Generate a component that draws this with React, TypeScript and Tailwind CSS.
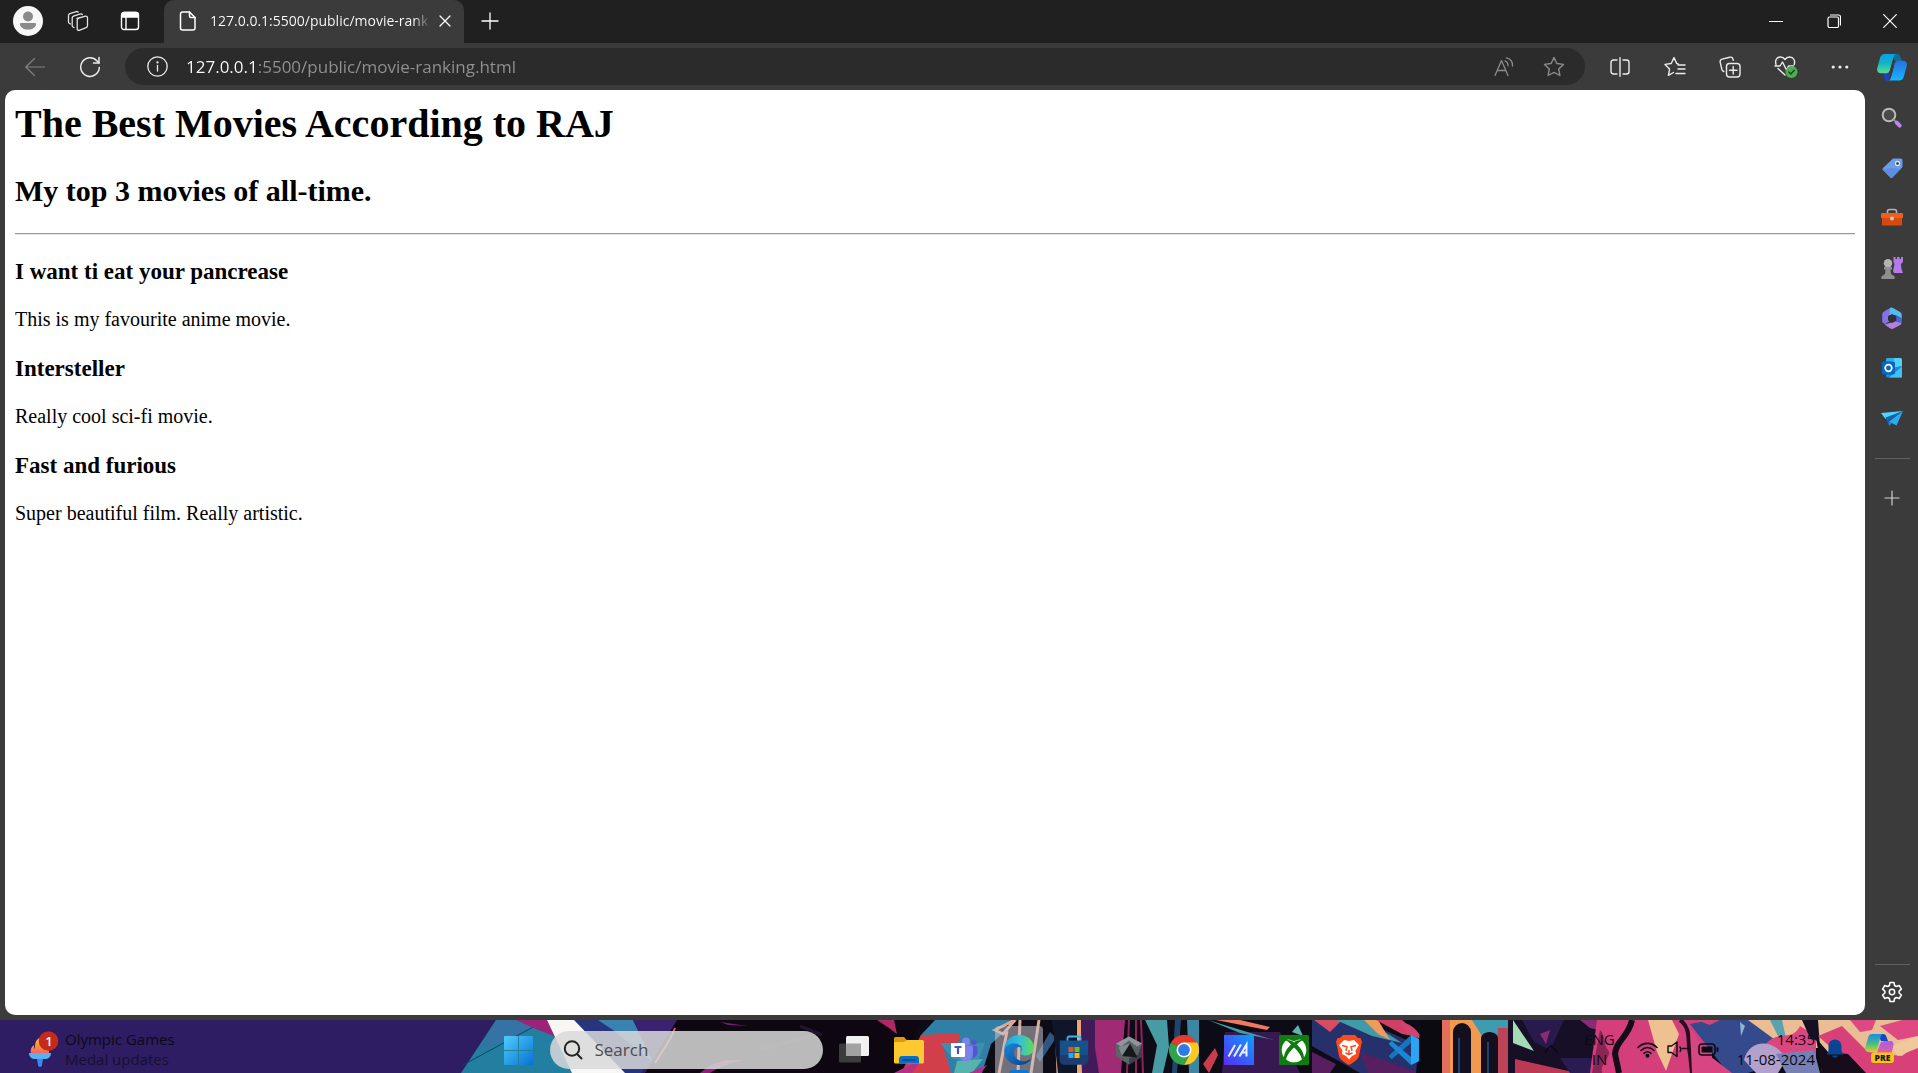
import React from "react";

type IconProps = { children: React.ReactNode; size?: number; box?: string; className?: string; stroke?: number };

function Line({ children, size = 20, box = "0 0 20 20", className = "", stroke = 1.2 }: IconProps) {
  return (
    <svg
      width={size}
      height={size}
      viewBox={box}
      fill="none"
      stroke="currentColor"
      strokeWidth={stroke}
      strokeLinecap="round"
      strokeLinejoin="round"
      className={`shrink-0 ${className}`}
      aria-hidden="true"
    >
      {children}
    </svg>
  );
}

function Art({ children, size = 30, box = "0 0 30 30" }: IconProps) {
  return (
    <svg width={size} height={size} viewBox={box} className="shrink-0" aria-hidden="true">
      {children}
    </svg>
  );
}

function IconButton({ label, className = "", children }: { label: string; className?: string; children: React.ReactNode }) {
  return (
    <button type="button" aria-label={label} className={`flex shrink-0 items-center justify-center ${className}`}>
      {children}
    </button>
  );
}

function TitleBar() {
  return (
    <header className="flex h-[43px] shrink-0 bg-[#202020] text-white">
      <div className="flex w-[164px] shrink-0 items-center pb-[1px] pl-[3px]">
        <IconButton label="Profile" className="h-full w-[50px]">
          <Art>
            <circle cx="15" cy="15" r="15" fill="#f7f7f7" />
            <circle cx="15" cy="10.5" r="5" fill="#8a8a8a" />
            <path d="M8 17h14a1 1 0 0 1 1 1c0 3.500-3.500 5.500-8 5.500s-8-2-8-5.500a1 1 0 0 1 1-1z" fill="#8a8a8a" />
          </Art>
        </IconButton>
        <IconButton label="Workspaces" className="h-full w-[49px] text-[#e4e4e4]">
          <Line size={22} box="0 0 22 22" stroke={1.3}>
            <path d="M10 8.500l8.500-2.300a1.600 1.600 0 0 1 2 1.600v8a2 2 0 0 1-1.300 1.800l-7 2.700a1.500 1.500 0 0 1-2-1.400v-8.600a2 2 0 0 1 1.300-1.900z" />
            <path d="M7 17.500l-1-.5a1.500 1.500 0 0 1-.8-1.300V8a2 2 0 0 1 1.300-1.900l7-2.200a1.500 1.500 0 0 1 1.800.7" />
            <path d="M3.500 14l-1.300-.8a1.500 1.500 0 0 1-.7-1.300V5.500a2 2 0 0 1 1.300-1.900l6.500-2a1.500 1.500 0 0 1 1.800.6" />
          </Line>
        </IconButton>
        <IconButton label="Tab actions menu" className="h-full w-[55px]">
          <Line size={20} stroke={1.4}>
            <rect x="1.500" y="1.500" width="17" height="17" rx="2.500" />
            <path d="M2 3.500a2 2 0 0 1 2-2h12a2 2 0 0 1 2 2V6H2z" fill="currentColor" />
            <path d="M6 6v12" />
          </Line>
        </IconButton>
      </div>
      <div className="flex w-[300px] min-w-0 items-center rounded-t-[10px] bg-[#3b3b3b] pb-[1px] pl-[14px] pr-1">
        <Line size={20} box="0 0 20 20" stroke={1.5}>
          <path d="M4 1h7.500L17 6.500V17a2 2 0 0 1-2 2H4.500a2 2 0 0 1-2-2V3A2 2 0 0 1 4 1z" />
          <path d="M11.500 1v4a1.500 1.500 0 0 0 1.500 1.500h4" />
        </Line>
        <span className="ml-3 w-[219px] shrink-0 overflow-hidden whitespace-nowrap bg-[linear-gradient(90deg,#fff_93%,#4b4b4b)] bg-clip-text text-[14px] leading-5 text-transparent">
          127.0.0.1:5500/public/movie-ranking.html
        </span>
        <IconButton label="Close tab" className="h-8 w-8">
          <Line size={12} box="0 0 12 12" stroke={1.3}>
            <path d="M1 1l10 10M11 1L1 11" />
          </Line>
        </IconButton>
      </div>
      <IconButton label="New tab" className="ml-[10px] h-[42px] w-8">
        <Line size={18} box="0 0 18 18" stroke={1.3}>
          <path d="M9 1v16M1 9h16" />
        </Line>
      </IconButton>
      <div className="ml-auto flex pb-[1px]">
        <IconButton label="Minimize" className="h-full w-[58px]">
          <Line size={14} box="0 0 14 14" stroke={1.2}>
            <path d="M0.500 7.500h13" />
          </Line>
        </IconButton>
        <IconButton label="Restore" className="h-full w-[57px]">
          <Line size={14} box="0 0 14 14" stroke={1.2}>
            <rect x="1" y="3" width="10.500" height="10.500" rx="1.500" />
            <path d="M3.500 1h8A2 2 0 0 1 13.500 3v8" />
          </Line>
        </IconButton>
        <IconButton label="Close" className="h-full w-[56px]">
          <Line size={14} box="0 0 14 14" stroke={1.2}>
            <path d="M.7.700l12.600 12.600M13.300.700L.7 13.300" />
          </Line>
        </IconButton>
      </div>
    </header>
  );
}

function Copilot() {
  return (
    <Art size={30}>
      <defs>
        <linearGradient id="cpA" x1="0" y1="0" x2="0" y2="1">
          <stop offset="0" stopColor="#0a9fe8" />
          <stop offset=".45" stopColor="#0cb4c8" />
          <stop offset="1" stopColor="#5fdc8c" />
        </linearGradient>
        <linearGradient id="cpB" x1="0" y1="0" x2="0" y2="1">
          <stop offset="0" stopColor="#2a6fe0" />
          <stop offset="1" stopColor="#14b8ff" />
        </linearGradient>
      </defs>
      <path d="M15 2h5c2 0 3 1 3.500 3l1.500 4h-7z" fill="#0d6f98" />
      <path d="M6 20h8l-3 9c-2 0-3-1-3.500-3z" fill="#1c3fd0" />
      <path d="M8 2h12c-2 0-3 1-3.500 3L13 18c-.6 2-1.800 3.300-4 3.300H4c-3 0-4.500-2.300-3.700-5.300L3 6c.8-2.600 2.500-4 5-4z" fill="url(#cpA)" />
      <path d="M22 28.500H10.500c2 0 3-1 3.500-3L17.500 12c.6-2 1.800-3.200 4-3.200H26c3 0 4.500 2.200 3.700 5.200L27 24c-.8 3-2.500 4.500-5 4.500z" fill="url(#cpB)" />
      <path d="M14.500 12.500h2.700L15.500 20l-1 3H11.300l2-5z" fill="#3b3b3b" />
    </Art>
  );
}

function Toolbar() {
  return (
    <div className="flex h-[47px] shrink-0 items-center bg-[#3b3b3b] text-[#ececec]">
      <div className="flex w-[125px] shrink-0 items-center pl-[7px]">
        <IconButton label="Back" className="h-9 w-[55px] text-[#818181]">
          <Line>
            <path d="M19.500 10H.8M9.500 1.500L.8 10l8.700 8.500" />
          </Line>
        </IconButton>
        <IconButton label="Refresh" className="h-9 w-[55px]">
          <Line size={22} box="0 0 22 22" stroke={1.5}>
            <path d="M20.300 11.500A9.300 9.300 0 1 1 17.800 4.700L20 7" />
            <path d="M20 1.500V7h-5.500" />
          </Line>
        </IconButton>
      </div>
      <div className="flex h-[37px] min-w-0 flex-1 items-center rounded-full bg-[#2b2b2b] pl-[22px] pr-[6px]">
        <button type="button" aria-label="View site information">
          <Line size={21} box="0 0 21 21" stroke={1.3}>
            <circle cx="10.500" cy="10.500" r="9.700" />
            <path d="M10.500 9.500v5.500" />
            <circle cx="10.500" cy="6.400" r=".5" fill="currentColor" />
          </Line>
        </button>
        <input
          aria-label="Address and search bar"
          readOnly
          value="127.0.0.1:5500/public/movie-ranking.html"
          className="ml-[18px] h-8 min-w-0 flex-1 bg-[linear-gradient(90deg,#fff_71px,#929292_71px)] bg-clip-text text-[17px] text-transparent outline-none"
        />
        <IconButton label="Read aloud" className="h-8 w-[50px] text-[#8b8b8b]">
          <Line stroke={1.3}>
            <path d="M1 18.500L7.500 3.500l6.500 15M3.200 13.500h8.600" />
            <path d="M11 3.800a5 5 0 0 1 3 5M12.300.800c3.800.500 6.700 4 6.200 8.200" />
          </Line>
        </IconButton>
        <IconButton label="Add to favorites" className="h-8 w-[50px] text-[#8b8b8b]">
          <Line size={22} box="0 0 22 22" stroke={1.4}>
            <path d="M11 1.500l2.900 6 6.600.9-4.800 4.600 1.200 6.500L11 16.400l-5.900 3.100 1.200-6.500L1.500 8.400l6.600-.9z" />
          </Line>
        </IconButton>
      </div>
      <div className="flex shrink-0 pl-[7px]">
        <IconButton label="Split screen" className="h-9 w-[55px]">
          <Line stroke={1.4}>
            <path d="M7 3H3.500A2.500 2.500 0 0 0 1 5.500v9A2.500 2.500 0 0 0 3.500 17H7M13 3h3.500A2.500 2.500 0 0 1 19 5.500v9a2.500 2.500 0 0 1-2.500 2.500H13M10 .700v18.600" />
          </Line>
        </IconButton>
        <IconButton label="Favorites" className="h-9 w-[55px]">
          <Line size={22} box="0 0 22 22" stroke={1.4}>
            <path d="M14 7.700l-1.300-.2L10 1.600 7.200 7.500l-6.200.9 4.600 4.500-1.200 6.500L9.500 16.500M14 9h7M14 13h7M12 17.500h9" />
          </Line>
        </IconButton>
        <IconButton label="Collections" className="h-9 w-[55px]">
          <Line size={22} box="0 0 22 22" stroke={1.4}>
            <rect x="7.500" y="7.500" width="13.500" height="13.500" rx="3" />
            <path d="M14.200 10.500v7.500M10.500 14.200H18M4.800 15.500c-1-.3-1.600-.9-1.900-2L1.200 6.400c-.4-1.600.3-2.900 2-3.300l7.500-1.900c1.600-.4 2.900.3 3.300 2l.3 1.200" />
          </Line>
        </IconButton>
        <IconButton label="Browser essentials" className="h-9 w-[57px]">
          <Line size={24} box="0 0 24 24" stroke={1.4}>
            <path d="M2 9.500C.5 4.500 3.500 2 6.500 2c2 0 3.500 1 4.500 2.500C12 3 13.500 2 15.500 2c4 0 6 3.500 4.700 7.500M1 11h5l2.500-4 4 8 2-4h5M4 13.500l7 6.500" />
            <circle cx="17.500" cy="17" r="6" fill="#4caf50" stroke="none" />
            <path d="M14.800 17l2 2 3.500-3.700" stroke="#20401f" strokeWidth="1.500" />
          </Line>
        </IconButton>
        <IconButton label="Settings and more" className="h-9 w-[51px]">
          <Line size={18} box="0 0 18 18" stroke={0}>
            <g fill="currentColor">
              <circle cx="2.200" cy="9" r="1.600" />
              <circle cx="9" cy="9" r="1.600" />
              <circle cx="15.800" cy="9" r="1.600" />
            </g>
          </Line>
        </IconButton>
        <IconButton label="Copilot" className="h-9 w-[53px]">
          <Copilot />
        </IconButton>
      </div>
    </div>
  );
}

const movies = [
  { title: "I want ti eat your pancrease", text: "This is my favourite anime movie." },
  { title: "Intersteller", text: "Really cool sci-fi movie." },
  { title: "Fast and furious", text: "Super beautiful film. Really artistic." },
];

function Page() {
  return (
    <main className="min-w-0 flex-1 overflow-auto rounded-[10px] bg-white p-[10px] pt-[11px] font-['Liberation_Serif',serif] text-black">
      <h1 className="text-[40px] font-bold leading-[46px]">The Best Movies According to RAJ</h1>
      <h2 className="mt-[27px] text-[30px] font-bold leading-[34px]">My top 3 movies of all-time.</h2>
      <hr className="mt-[25px] border-t border-b border-t-[#9a9a9a] border-b-[#e4e4e4]" />
      <div className="mt-[23px]">
        {movies.map((m) => (
          <section key={m.title} className="mb-6">
            <h3 className="text-[23px] font-bold leading-[27px]">{m.title}</h3>
            <p className="mt-[23px] text-[20px] leading-[23px]">{m.text}</p>
          </section>
        ))}
      </div>
    </main>
  );
}

const sideApps: { label: string; art: React.ReactNode }[] = [
  {
    label: "Search",
    art: (
      <>
        <circle cx="8" cy="8" r="6.300" fill="#4a4a4a" stroke="#b9b9b9" strokeWidth="2" />
        <path d="M12.500 12.500l2 2" stroke="#8d8d8d" strokeWidth="2" />
        <path d="M15.700 15.700l3 3" stroke="#b889ea" strokeWidth="4" strokeLinecap="round" />
      </>
    ),
  },
  {
    label: "Shopping",
    art: (
      <>
        <path d="M12 1.500h7.500a2 2 0 0 1 2 2V10L11.500 20.500a1.500 1.500 0 0 1-2.200 0L2 13.200a1.500 1.500 0 0 1 0-2.200z" fill="#6c9bea" />
        <path d="M2 12l9-1 9 1-8.500 8.500a1.500 1.500 0 0 1-2.200 0z" fill="#5684db" opacity=".6" />
        <circle cx="16.500" cy="6.500" r="2" fill="#2c2c2c" stroke="#dce6fa" strokeWidth="1.300" />
      </>
    ),
  },
  {
    label: "Tools",
    art: (
      <>
        <path d="M6.500 6V4.500a2 2 0 0 1 2-2h5a2 2 0 0 1 2 2V6" fill="none" stroke="#b5b5b5" strokeWidth="1.600" />
        <path d="M1 6h20a1 1 0 0 1 1 1v4H0V7a1 1 0 0 1 1-1z" fill="#ee5f1c" />
        <path d="M1 11h20v6.500a1 1 0 0 1-1 1H2a1 1 0 0 1-1-1z" fill="#d9480f" />
        <circle cx="11" cy="11.500" r="2" fill="#c9c9c9" />
      </>
    ),
  },
  {
    label: "Games",
    art: (
      <>
        <path d="M12.500 0h2v2h1.500V0h2.500v2H20V0h2v5l-2 2 .5 5 1.500 4h-9l-1-2 1.500-7-1-2z" fill="#b57be8" />
        <circle cx="7" cy="6.300" r="4.200" fill="#b4b4b4" />
        <path d="M3 10h8v2.500H9.500l.5 4.500 3 2c1 .7 1 3 0 3H1c-1 0-1-2.300 0-3l3-2 .5-4.500H3z" fill="#8f8f8f" />
      </>
    ),
  },
  {
    label: "Microsoft 365",
    art: (
      <>
        <path d="M8.500 1.200L3 4.400a3.500 3.500 0 0 0-1.800 3V15l2.600 2.200L8 14.500V7.800z" fill="#8570e6" />
        <path d="M8.500 1.200a4 4 0 0 1 4 0L19 5a3.500 3.500 0 0 1 1.800 3v4.500L14.500 8 8 8.200z" fill="#55b9f2" />
        <path d="M14.500 8l6.300 3v4a3.500 3.500 0 0 1-1.800 3l-3 1.500-2-4.500z" fill="#4169cf" />
        <path d="M3.500 17.400L14 14.500l6.500 1.500a3.500 3.500 0 0 1-1.500 2l-6.300 3.500a3.500 3.500 0 0 1-3.400 0z" fill="#b37ee0" />
        <path d="M11 7l4.300 2.500v4L11 16l-4-2.800v-4z" fill="#303038" />
      </>
    ),
  },
  {
    label: "Outlook",
    art: (
      <>
        <rect x="5" y="1" width="16" height="11" rx="1.500" fill="#50d0fa" />
        <path d="M5 1h8v10H5z" fill="#1490df" opacity=".55" />
        <path d="M5 12l16-3v10a1.500 1.500 0 0 1-1.500 1.500H6.500A1.500 1.500 0 0 1 5 19z" fill="#1b8ad6" />
        <path d="M21 9.500L8 20.500h12a1 1 0 0 0 1-1z" fill="#3fc3f4" />
        <rect x="1" y="4.500" width="13" height="13" rx="1.500" fill="#0567c4" />
        <circle cx="7.500" cy="11" r="3.300" fill="none" stroke="#fff" strokeWidth="1.700" />
      </>
    ),
  },
  {
    label: "Drop",
    art: (
      <>
        <path d="M0 6L22 4 4.500 12z" fill="#53d4fb" />
        <path d="M4.500 10.500L22 4 8 13.500V19z" fill="#0b66b5" />
        <path d="M22 4l-6.500 14.500-7.500-4z" fill="#2aaaf0" />
        <path d="M8 14l3 2-3 3z" fill="#1790dc" />
      </>
    ),
  },
];

function SideBar() {
  return (
    <aside className="flex w-[53px] shrink-0 flex-col items-center pl-[1px] pt-[3px]">
      {sideApps.map((app) => (
        <IconButton key={app.label} label={app.label} className="h-[50px] w-full">
          <Art size={22} box="0 0 22 22">
            {app.art}
          </Art>
        </IconButton>
      ))}
      <div className="mt-[15px] h-px w-[35px] bg-[#616161]" />
      <IconButton label="Customize" className="mt-[14px] h-[50px] w-full text-[#cfcfcf]">
        <Line size={16} box="0 0 16 16" stroke={1.2}>
          <path d="M8 1v14M1 8h14" />
        </Line>
      </IconButton>
      <div className="mt-auto h-px w-[35px] bg-[#616161]" />
      <IconButton label="Settings" className="h-[50px] w-full pt-1 text-white">
        <Line size={22} box="0 0 22 22" stroke={1.5}>
          <path d="M9 1.500h4l.6 3 1.700 1 2.900-1 2.200 3.600-2.300 2v1.900l2.300 2-2.200 3.500-2.900-1-1.700 1-.6 3H9l-.6-3-1.700-1-2.900 1L1.600 14l2.300-2v-1.900l-2.300-2 2.200-3.600 2.900 1 1.700-1z" />
          <circle cx="11" cy="11" r="2.700" />
        </Line>
      </IconButton>
    </aside>
  );
}

/* Painted desktop wallpaper that shows through the taskbar. */
function Wallpaper() {
  return (
    <svg className="absolute inset-0 h-full w-full" viewBox="0 0 1918 53" preserveAspectRatio="none" aria-hidden="true">
      <rect width="1918" height="53" fill="#0d0b16" />
      <rect width="700" height="53" fill="#2e1d62" />
      <path d="M461 53L496 0h64l20 53z" fill="#227fa0" />
      <path d="M496 0h27l14 8-58 22z" fill="#3673a5" />
      <path d="M463 45l70-38" stroke="#173f6b" strokeWidth="1" />
      <path d="M516 0h32l8 17-20-8z" fill="#9b2379" />
      <path d="M573 0h30l48 41-10 12h-30z" fill="#27357f" />
      <path d="M598 0h35l20 42-40-32z" fill="#3a83b0" />
      <path d="M633 0h46l-26 40z" fill="#3b226e" />
      <path d="M547 0h27l51 53h-53z" fill="#f8f7f4" />
      <path d="M677 0h243l-16 53H645z" fill="#0e0711" />
      <path d="M675 8c-4 12-12 22-20 35" stroke="#d8607c" strokeWidth="2" fill="none" />
      <path d="M720 2l28 4-20-1z" fill="#6d2270" />
      <path d="M700 53c14-12 26-14 44-13-16 3-24 7-34 13z" fill="#8b2177" />
      <path d="M800 6l22 9M760 30l50-14" stroke="#25122c" strokeWidth="3" />
      <path d="M877 0h17l3 14-8-6z" fill="#b02965" />
      <path d="M935 0h82l-26 24-9 29h-75l14-38z" fill="#2f7fa6" />
      <path d="M921 15l39-2-2 10h-16l9 30h-50z" fill="#d13f4a" />
      <path d="M940 23h45l-8 20-24-4z" fill="#3c8fae" />
      <path d="M957 41l26-2-11 14h-18z" fill="#58b3ae" />
      <path d="M894 53l28-14-10 14zM969 53l18-8-6 8z" fill="#b82f86" />
      <path d="M995 10l20-10-12 14zM999 53l8-42M1020 0l-2 53M1039 0l-8 53M1056 0l2 53" stroke="#dba994" strokeWidth="3" />
      <path d="M1036 36l14-24 6 6-16 24z" fill="#31557f" />
      <path d="M1052 0h24v53h-18z" fill="#101629" />
      <path d="M1077 0h4l1 53h-5z" fill="#e7a878" />
      <path d="M1081 0h18v53h-17z" fill="#431a58" />
      <path d="M1095 0h30l-4 53h-22l-4-25z" fill="#a02a74" />
      <path d="M1129 0l-2 53M1136 0v53M1141 0l2 53" stroke="#8d2459" strokeWidth="2" />
      <path d="M1145 0h22l2 27-6 26h-11l5-28z" fill="#469ba5" />
      <path d="M1187 0h12v53h-10z" fill="#3a88a3" />
      <path d="M1175 0h6l-4 53h-5z" fill="#1f4769" />
      <path d="M1225 12h55l20 41h-78z" fill="#371850" />
      <path d="M1216 0h24l30 7-3 3z" fill="#ef7860" />
      <path d="M1208 0l66 20-34-7z" fill="#3aa0a6" />
      <path d="M1215 28l-12 16 6 9 9-18z" fill="#ca3b4d" />
      <path d="M1298 5l5 11-11-4z" fill="#5bb7ac" />
      <path d="M1312 0h50l58 26v27h-60l-48-27z" fill="#26316c" />
      <path d="M1314 0h28l-12 12z" fill="#d84c62" />
      <path d="M1336 0h30l36 23-30-7z" fill="#3e9ba7" />
      <path d="M1364 0h14l12 20-12-6z" fill="#f09a5c" />
      <path d="M1376 0h26l22 18-22-4z" fill="#cf3f66" />
      <path d="M1312 32l24 12-6 9h-18zM1360 32l60 21h-52z" fill="#571f60" />
      <path d="M1400 2c12 2 18 8 21 17l-14-5z" fill="#d2436f" />
      <path d="M1421 0h21v53h-26z" fill="#0b0a10" />
      <path d="M1442 0h10v53h-10z" fill="#e0705b" />
      <path d="M1450 0h32l2 53h-34z" fill="#f0994f" />
      <path d="M1472 0h40l-4 22-26-6z" fill="#3f9cae" />
      <path d="M1498 8h14v45h-16z" fill="#bd4356" />
      <path d="M1453 53V12a9 9 0 0 1 18 0v41zM1481 53V18a8.500 6 0 0 1 17 0v35z" fill="#130f1e" />
      <path d="M1459 53V18M1488 53V22" stroke="#24406e" strokeWidth="2" />
      <path d="M1508 0h90l-6 53h-84z" fill="#160f25" />
      <path d="M1522 0h42l-14 30-16-8z" fill="#281a4d" />
      <path d="M1540 14l10-4-4 14zM1580 0h18v10l-8-2z" fill="#8a2b73" />
      <path d="M1513 0l21 31-21-8z" fill="#a2dbb6" />
      <path d="M1515 39l62 14h-62z" fill="#bb3955" />
      <path d="M1560 38h34v15h-24z" fill="#2a1c50" />
      <path d="M1597 0h115v53h-122z" fill="#d43e7b" />
      <path d="M1600 10c6 6 3 14 8 20s-8 12-6 23h-10z" fill="#8a2556" />
      <path d="M1632 0c-4 18-16 20-17 34l4 19" stroke="#150c18" strokeWidth="6" fill="none" />
      <path d="M1680 0c12 8 7 24 10 34l2 19" stroke="#260d20" strokeWidth="4" fill="none" />
      <path d="M1648 0h24l7 14-13 37-9-19z" fill="#efc090" />
      <path d="M1690 4l22-4h90l-14 40-40 13h-20z" fill="#354a8d" />
      <path d="M1690 8l20 28 22 17h-40z" fill="#d84682" />
      <path d="M1696 0h24l-10 5z" fill="#ce4777" />
      <path d="M1740 2l5 4-4 10z" fill="#8fb6cf" />
      <path d="M1748 0h70v28h-32z" fill="#eabd94" />
      <path d="M1770 0h12l4 18-8-2z" fill="#58a3af" />
      <path d="M1766 24c12-14 26-2 34-18l16 10v22h-32z" fill="#dc4680" />
      <path d="M1744 40c6-24 34-20 42 0l-8 13h-22z" fill="#b3a0cb" />
      <path d="M1776 34l38-4 6 23h-34z" fill="#7780b5" />
      <path d="M1802 0h18v22l-10-4z" fill="#151125" />
      <path d="M1818 0h100v53h-96z" fill="#eabd94" />
      <path d="M1850 0h26l-4 10-12 2zM1880 6l22-6h16v16l-20 4z" fill="#de4981" />
      <path d="M1818 16l24-10 26 26 34 4 16-12v29h-58z" fill="#d84079" />
      <path d="M1890 26l28-10v12l-20 8z" fill="#f1c79c" />
      <path d="M1816 18l12 14 20 2 18 19h-44z" fill="#170c19" />
    </svg>
  );
}

const taskApps: { label: string; active?: boolean; art: React.ReactNode }[] = [
  {
    label: "Task View",
    art: (
      <>
        <rect x="0" y="8.500" width="22" height="19" rx="1.500" fill="#3c3c3c" />
        <rect x="7" y="1" width="23" height="20" rx="1.500" fill="#f1f1f1" />
        <path d="M7 8.500h15V21H8.500A1.500 1.500 0 0 1 7 19.500z" fill="#a2a2a2" />
      </>
    ),
  },
  {
    label: "File Explorer",
    art: (
      <>
        <path d="M0 3.500A1.500 1.500 0 0 1 1.500 2H10l3 3.500V9H0z" fill="#dc9a06" />
        <path d="M0 7h10l3-2h15.500A1.500 1.500 0 0 1 30 6.500V27a1.500 1.500 0 0 1-1.500 1.500h-27A1.500 1.500 0 0 1 0 27z" fill="#fdc92f" />
        <path d="M5 28.500V24a3 3 0 0 1 3-3h14a3 3 0 0 1 3 3v4.500z" fill="#0b6ecb" />
        <path d="M8.500 25h13" stroke="#07478a" strokeWidth="1.500" />
      </>
    ),
  },
  {
    label: "Teams",
    art: (
      <>
        <circle cx="25" cy="7.500" r="2.800" fill="#5059c9" />
        <circle cx="17" cy="6.500" r="4" fill="#7b83eb" />
        <path d="M21 11h6a1.500 1.500 0 0 1 1.500 1.500V18a5 5 0 0 1-6.500 4.500z" fill="#5059c9" />
        <path d="M10 11h12.500a1.500 1.500 0 0 1 1.500 1.500V19a7 7 0 0 1-14 0z" fill="#7b83eb" />
        <rect x="2" y="8" width="14" height="14" rx="1" fill="#fff" />
        <path d="M5.500 12h7M9 12v7" stroke="#4b53bc" strokeWidth="2.200" />
      </>
    ),
  },
  {
    label: "Microsoft Edge",
    active: true,
    art: (
      <>
        <defs>
          <linearGradient id="edgeTop" x1="0" y1=".5" x2="1" y2=".5">
            <stop offset="0" stopColor="#1f9fe4" />
            <stop offset=".5" stopColor="#2fc1dc" />
            <stop offset="1" stopColor="#63dc50" />
          </linearGradient>
          <linearGradient id="edgeBot" x1="0" y1="0" x2="1" y2="1">
            <stop offset="0" stopColor="#1a86d8" />
            <stop offset="1" stopColor="#0c3f8e" />
          </linearGradient>
        </defs>
        <path d="M.2 14C.8 6 7.200 0 15 0c8.500 0 15 6 15 12.500 0 5-4 8-8.200 8-4 0-5.300-1.500-5.300-2.500 0-.8 1.500-1.500 1.500-4 0-3.500-3.500-5.500-7.500-5.500-5 0-8.500 2.500-10.300 5.500z" fill="url(#edgeTop)" />
        <path d="M.2 14C2 10.500 5.500 8.500 10.500 8.500c3.800 0 6.500 1.800 7.300 4-5-2-8.300 1.500-7.800 6 .5 5 5.500 8.500 11.500 7.500 2.800-.5 5-1.800 6.300-3C25.500 27.500 21 30 15 30 6.500 30-.3 23 .2 14z" fill="url(#edgeBot)" />
      </>
    ),
  },
  {
    label: "Microsoft Store",
    art: (
      <>
        <path d="M8.500 7V3A1.500 1.500 0 0 1 10 1.500h10A1.500 1.500 0 0 1 21.500 3v4" fill="none" stroke="#35b5ef" strokeWidth="1.800" />
        <path d="M.8 5.500h28.400V25a4.500 4.500 0 0 1-4.500 4.500H5.300A4.500 4.500 0 0 1 .8 25z" fill="#17518c" />
        <path d="M.8 20h28.400v5a4.500 4.500 0 0 1-4.500 4.500H5.300A4.500 4.500 0 0 1 .8 25z" fill="#1c3d6d" />
        <path d="M9.500 12h5v5h-5z" fill="#f25022" />
        <path d="M15.500 12h5v5h-5z" fill="#7fba00" />
        <path d="M9.500 18h5v5h-5z" fill="#2aa8ef" />
        <path d="M15.500 18h5v5h-5z" fill="#ffb900" />
      </>
    ),
  },
  {
    label: "Armoury Crate",
    art: (
      <>
        <path d="M15 1.500l13 7v13l-13 8-13-8v-13z" fill="#5b6268" />
        <path d="M15 1.500l13 7-5 3-8-6-8 6-5-3z" fill="#8e969c" />
        <path d="M28 8.500v13l-13 8v-6l9-4z" fill="#3c4247" />
        <path d="M16 8.500l7.500 14L8 21z" fill="#16191c" />
        <path d="M16 8.500L8 21l-3.500-9z" fill="#aab1b5" opacity=".5" />
      </>
    ),
  },
  {
    label: "Google Chrome",
    art: (
      <>
        <path d="M15 15L2 7.500a15 15 0 0 1 26 0z" fill="#e63b2e" />
        <path d="M15 15L2 7.500A15 15 0 0 0 15 30l7-12z" fill="#2ea44f" />
        <path d="M15 30A15 15 0 0 0 28 7.500H15l6.500 11z" fill="#fcc91f" />
        <circle cx="15" cy="15" r="7.500" fill="#fff" />
        <circle cx="15" cy="15" r="5.900" fill="#2c7be8" />
      </>
    ),
  },
  {
    label: "MyASUS",
    art: (
      <>
        <defs>
          <linearGradient id="asus" x1="0" y1="1" x2="1" y2="0">
            <stop offset="0" stopColor="#5a2bf5" />
            <stop offset="1" stopColor="#0aa0fb" />
          </linearGradient>
        </defs>
        <rect width="30" height="30" fill="url(#asus)" />
        <path d="M4.500 21.500L11 10M10 21.500L17 9.500M15.500 21.500L22.500 9.500v12M18.500 17.500h4" stroke="#eef" strokeWidth="2" fill="none" />
      </>
    ),
  },
  {
    label: "Xbox",
    art: (
      <>
        <rect width="30" height="30" rx="1.500" fill="#107c10" />
        <circle cx="15" cy="15" r="12.300" fill="#fff" />
        <path d="M8 4.600C10.500 4 13 5.300 15 6.600c2-1.300 4.500-2.600 7-2L20 2H10z" fill="#107c10" />
        <path d="M12 9.500C8 13 5 18 5 23l2 1.800C8 20 11.500 15.500 15 12.500c3.500 3 7 7.500 8 12.300l2-1.800c0-5-3-10-7-13.500 2-2.300 4-3.500 5.500-3.700-1-1.300-5.500-.8-8.500 1.700C12 5 7.500 4.500 6.500 5.800 8 6 10 7.200 12 9.500z" fill="#107c10" />
      </>
    ),
  },
  {
    label: "Brave",
    art: (
      <>
        <path d="M9 0h12l3 3h2.500l1.500 4-1 4-2 10c-.5 3-6 7-10 9-4-2-9.500-6-10-9L3 11 2 7l1.500-4H6z" fill="#fb4a1c" />
        <path d="M10 5l5 1 5-1 5 5-3.500 5.500.500 3.500-4 2-3 3.500-3-3.500-4-2 .5-3.500L5 10z" fill="#fff" />
        <path d="M8 10.500l5 1.300-1 4M22 10.500l-5 1.300 1 4M11.500 18l3.500 1.500 3.500-1.500M15 15v4" stroke="#fb4a1c" strokeWidth="1.500" fill="none" />
      </>
    ),
  },
  {
    label: "Visual Studio Code",
    art: (
      <>
        <path d="M22 0l7 3.200a2 2 0 0 1 1 1.800v20a2 2 0 0 1-1 1.800L22 30V0z" fill="#2ba5f2" />
        <path d="M22 0v8L3.500 23.500a1.200 1.200 0 0 1-1.600 0L.4 22a1.200 1.200 0 0 1 0-1.800z" fill="#1576bd" />
        <path d="M22 30v-8L3.500 6.500a1.200 1.200 0 0 0-1.600 0L.4 8a1.200 1.200 0 0 0 0 1.800z" fill="#1888d4" />
      </>
    ),
  },
];

function Taskbar() {
  return (
    <footer className="relative h-[53px] shrink-0 overflow-hidden">
      <Wallpaper />
      <div className="relative grid h-full grid-cols-[1fr_auto_1fr] text-[#0c0a14]">
        <button type="button" className="flex h-full items-center justify-self-start pl-[29px] pt-1 text-left">
          <Art size={36} box="0 0 36 36">
            <defs>
              <linearGradient id="flame" x1="0" y1="0" x2="0" y2="1">
                <stop offset="0" stopColor="#fbbf24" />
                <stop offset="1" stopColor="#f8605f" />
              </linearGradient>
            </defs>
            <path d="M2 23c-1-4 0-7 3-9 0 2 0 3 1 4 0-5 0-8 4-11l10 8v8z" fill="url(#flame)" />
            <path d="M0 22h22c0 4-3 6-6 6H6c-3 0-6-2-6-6z" fill="#56b2f7" />
            <path d="M8 28h6l-1 6a2 2 0 0 1-4 0z" fill="#3d86ee" />
            <circle cx="19.500" cy="10" r="9.800" fill="#c42b1c" />
            <text x="20" y="15" fill="#fff" fontSize="13" fontWeight="600" fontFamily="Open Sans, sans-serif" textAnchor="middle">
              1
            </text>
          </Art>
          <span className="text-[15px] leading-5">
            <span className="block">Olympic Games</span>
            <span className="block text-[#17102f]">Medal updates</span>
          </span>
        </button>
        <div className="flex items-center pl-1">
          <IconButton label="Start" className="h-full w-[55px] pt-[7px]">
            <Art size={29} box="0 0 29 29">
              <defs>
                <linearGradient id="win" x1="0" y1="0" x2="1" y2="1">
                  <stop offset="0" stopColor="#50ccfb" />
                  <stop offset="1" stopColor="#0672d4" />
                </linearGradient>
              </defs>
              <path d="M1 0h13v14H0V1a1 1 0 0 1 1-1zM15 0h13a1 1 0 0 1 1 1v13H15zM0 15h14v14H1a1 1 0 0 1-1-1zM15 15h14v13a1 1 0 0 1-1 1H15z" fill="url(#win)" />
            </Art>
          </IconButton>
          <label className="mx-1 mt-[11px] flex h-[38px] w-[273px] items-center self-start rounded-full bg-[#d9d9d9]/85 pl-[13px] text-[#222]">
            <Line size={20} stroke={2}>
              <circle cx="9" cy="8.500" r="7.200" />
              <path d="M14 14l4.500 4.500" />
            </Line>
            <input
              type="search"
              aria-label="Search"
              placeholder="Search"
              className="ml-3 w-[200px] bg-transparent text-[17px] outline-none placeholder:text-[#4d4d4d]"
            />
          </label>
          {taskApps.map((app) => (
            <IconButton key={app.label} label={app.label} className="h-full w-[55px]">
              <span
                className={
                  app.active
                    ? "relative mt-[6px] flex h-[47px] w-12 items-center justify-center rounded-t bg-[#c9c4cc]/55"
                    : "mt-[7px] flex"
                }
              >
                <Art>{app.art}</Art>
                {app.active && <span className="absolute bottom-0 left-[14px] h-[3px] w-5 rounded-t bg-[#0a78d4]" />}
              </span>
            </IconButton>
          ))}
        </div>
        <div className="flex items-center justify-self-end pr-[23px] pt-[5px] text-[15px] leading-5">
          <IconButton label="Show hidden icons" className="mr-[26px]">
            <Line size={14} box="0 0 14 14" stroke={1.6}>
              <path d="M1 10l6-6.500L13 10" />
            </Line>
          </IconButton>
          <button type="button" className="mr-[22px] text-center">
            <span className="block">ENG</span>
            <span className="block">IN</span>
          </button>
          <button type="button" aria-label="Network, volume and battery" className="mr-[18px] flex items-center gap-[9px]">
            <Line size={21} box="0 0 21 21" stroke={1.6}>
              <path d="M1 8.500c5.500-5.500 13.500-5.500 19 0M4 11.500c4-3.800 9-3.800 13 0M7 14.300c2.300-2 4.700-2 7 0" />
              <circle cx="10.500" cy="16.800" r="1.200" fill="currentColor" />
            </Line>
            <Line size={22} box="0 0 22 22" stroke={1.4}>
              <path d="M1 8v6.500h3.500L10 18.500V4L4.500 8zM13 9c1 1.400 1 3.200 0 4.500M15.500 10.500h6" />
            </Line>
            <Line size={21} box="0 0 21 21" stroke={1.6}>
              <rect x="1" y="5" width="16" height="11" rx="3" />
              <rect x="3.500" y="7.500" width="11" height="6" rx="1" fill="currentColor" stroke="none" />
              <path d="M19.500 9v3" strokeWidth="2" />
            </Line>
          </button>
          <button type="button" className="text-right">
            <time dateTime="2024-08-11T14:35" className="block">
              <span className="block">14:35</span>
              <span className="block">11-08-2024</span>
            </time>
          </button>
          <IconButton label="Notifications" className="ml-[10px]">
            <Art size={20} box="0 0 20 20">
              <path d="M10 .5c4 0 6.500 3 6.500 7V12l1.800 3.500H1.700L3.500 12V7.500c0-4 2.500-7 6.500-7z" fill="#0a4595" />
              <path d="M7 16.500h6c-.500 3-5.500 3-6 0z" fill="#0a4595" />
            </Art>
          </IconButton>
          <IconButton label="Copilot preview" className="ml-[20px]">
            <Art>
              <defs>
                <linearGradient id="preA" x1="0" y1="0" x2="0" y2="1">
                  <stop offset="0" stopColor="#1e8ae8" />
                  <stop offset=".5" stopColor="#3fb98c" />
                  <stop offset="1" stopColor="#d5d21f" />
                </linearGradient>
                <linearGradient id="preB" x1="0" y1="0" x2="0" y2="1">
                  <stop offset="0" stopColor="#a55df2" />
                  <stop offset="1" stopColor="#f2607c" />
                </linearGradient>
              </defs>
              <path d="M13 0h5c2 0 3 1 3.500 3l1.500 4h-7z" fill="#1746c4" />
              <path d="M7 0h12c-2 0-3 1-3.500 3L12 15c-.500 2-1.800 3-4 3H4c-3 0-4.500-2-3.700-5L3 4c.700-2.700 2-4 4-4z" fill="url(#preA)" />
              <path d="M20.500 7H25c3 0 4 2 3.500 4.500L26 21H11l4-11c.600-2 2.500-3 5.500-3z" fill="url(#preB)" />
              <rect x="6" y="18.500" width="23" height="10.500" rx="3" fill="#fdc512" />
              <text x="17.500" y="27" fill="#1a1a1a" fontSize="8.500" fontWeight="800" fontFamily="Open Sans, sans-serif" textAnchor="middle">
                PRE
              </text>
            </Art>
          </IconButton>
        </div>
      </div>
    </footer>
  );
}

export default function App() {
  return (
    <div className="flex h-screen flex-col overflow-hidden bg-[#3b3b3b] font-['Open_Sans',sans-serif]">
      <TitleBar />
      <Toolbar />
      <div className="flex min-h-0 flex-1 pb-[5px] pl-[5px]">
        <Page />
        <SideBar />
      </div>
      <Taskbar />
    </div>
  );
}
